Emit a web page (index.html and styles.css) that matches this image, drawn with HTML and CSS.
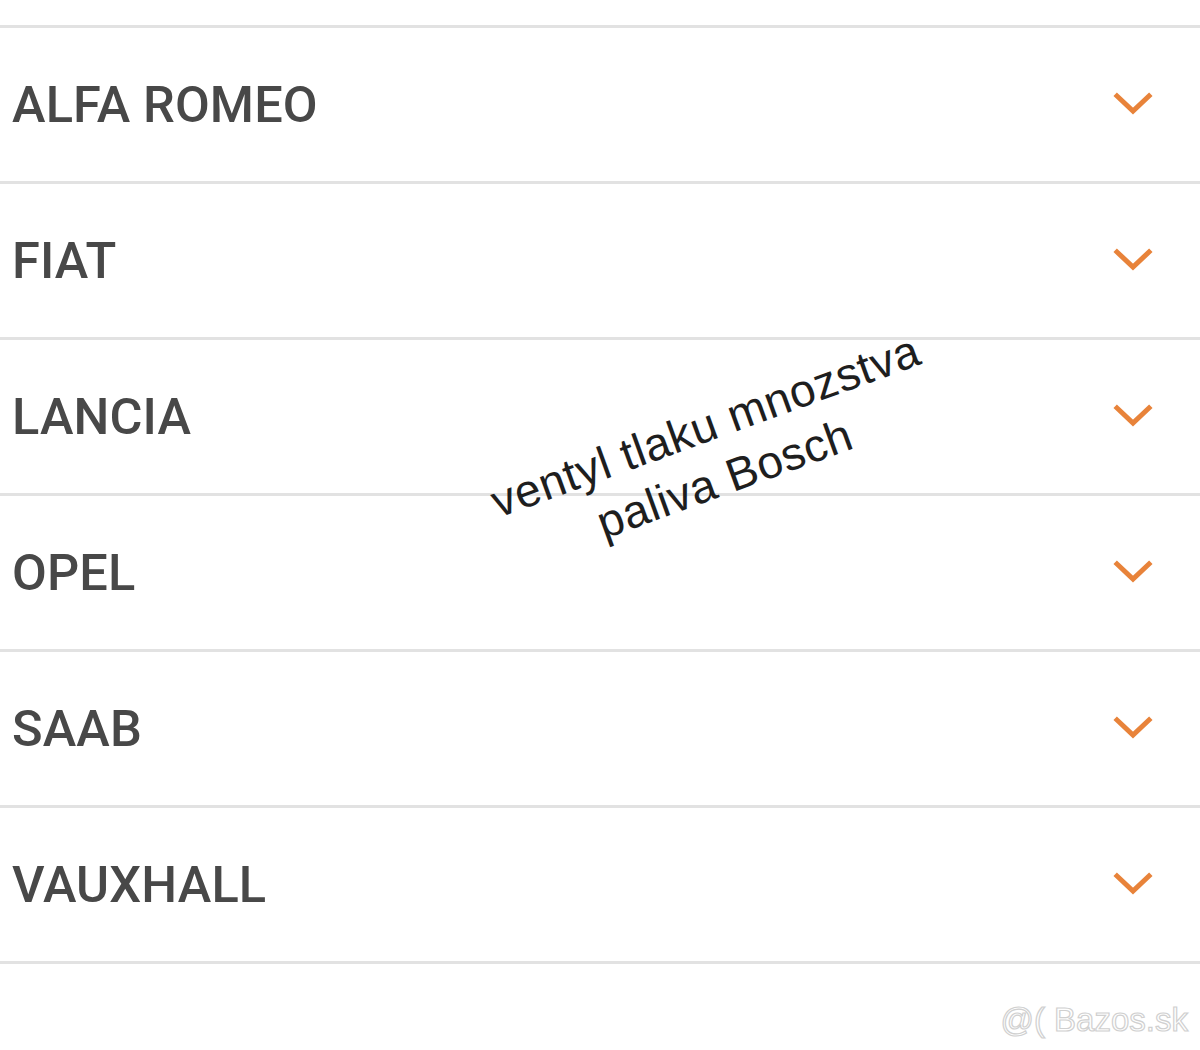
FILE: index.html
```html
<!DOCTYPE html>
<html>
<head>
<meta charset="utf-8">
<link rel="stylesheet" href="styles.css">
</head>
<body>
<div class="page">
  <ul class="brands">
    <li class="brand"><span class="name">ALFA ROMEO</span><svg class="chev" viewBox="0 0 40 26"><path d="M4 4 L20 19 L36 4"/></svg></li>
    <li class="brand"><span class="name">FIAT</span><svg class="chev" viewBox="0 0 40 26"><path d="M4 4 L20 19 L36 4"/></svg></li>
    <li class="brand"><span class="name">LANCIA</span><svg class="chev" viewBox="0 0 40 26"><path d="M4 4 L20 19 L36 4"/></svg></li>
    <li class="brand"><span class="name">OPEL</span><svg class="chev" viewBox="0 0 40 26"><path d="M4 4 L20 19 L36 4"/></svg></li>
    <li class="brand"><span class="name">SAAB</span><svg class="chev" viewBox="0 0 40 26"><path d="M4 4 L20 19 L36 4"/></svg></li>
    <li class="brand"><span class="name">VAUXHALL</span><svg class="chev" viewBox="0 0 40 26"><path d="M4 4 L20 19 L36 4"/></svg></li>
  </ul>
  <div class="note">ventyl tlaku mnozstva<br>paliva Bosch</div>
  <div class="watermark">@( Bazos.sk</div>
</div>
</body>
</html>
```
FILE: styles.css
```css
html, body {
  margin: 0;
  padding: 0;
  background: #fff;
}
.page {
  position: relative;
  width: 1200px;
  height: 1050px;
  overflow: hidden;
  font-family: Roboto, "Liberation Sans", sans-serif;
}
.brands {
  list-style: none;
  margin: 0;
  padding: 25px 0 0 0;
  border-bottom: 3px solid #e2e2e2;
}
.brand {
  display: flex;
  align-items: center;
  justify-content: space-between;
  height: 153px;
  border-top: 3px solid #e2e2e2;
  padding: 0 47px 0 12px;
}
.name {
  font-size: 50.5px;
  font-weight: 500;
  color: #484848;
  letter-spacing: 0.15px;
}
.chev {
  width: 40px;
  height: 26px;
}
.chev path {
  fill: none;
  stroke: #e8833a;
  stroke-width: 5;
  stroke-linecap: square;
  stroke-linejoin: miter;
}
.note {
  position: absolute;
  left: 715px;
  top: 452px;
  transform: translate(-50%, -50%) rotate(-20deg);
  font-family: "Liberation Sans", Arial, sans-serif;
  font-size: 46px;
  line-height: 56px;
  letter-spacing: 0.6px;
  color: #1e1e1e;
  text-align: center;
  white-space: nowrap;
}
.watermark {
  position: absolute;
  right: 12px;
  top: 1001px;
  font-family: "Liberation Sans", Arial, sans-serif;
  font-size: 33px;
  color: transparent;
  -webkit-text-stroke: 1.2px #d0d0d0;
  letter-spacing: 0px;
}
```
